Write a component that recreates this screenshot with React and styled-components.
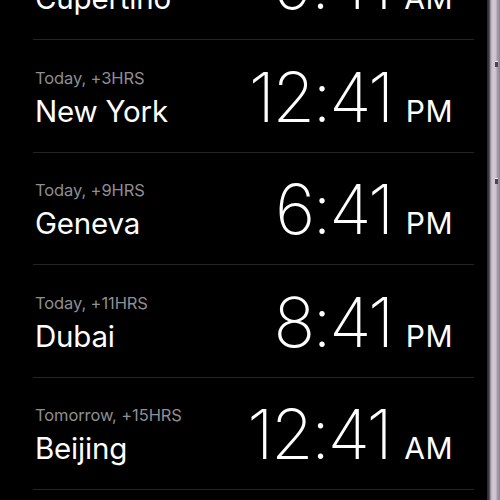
import React from "react";
import styled, { createGlobalStyle } from "styled-components";

const GlobalStyle = createGlobalStyle`
  html, body {
    margin: 0;
    padding: 0;
    background: #000;
  }
  body {
    font-family: Inter, "Noto Sans", sans-serif;
    -webkit-font-smoothing: antialiased;
  }
`;

const Device = styled.div`
  display: flex;
  width: 500px;
  height: 500px;
  overflow: hidden;
`;

const Screen = styled.div`
  flex: 1;
  background: #000;
  padding: 0 13px 0 33px;
  overflow: hidden;
`;

const Bezel = styled.div`
  position: relative;
  width: 13px;
  background: linear-gradient(
    to right,
    #2c2a30 0px,
    #3c3940 2px,
    #76707c 3px,
    #b8afbb 4px,
    #d2c9d3 6px,
    #cbc2cd 9px,
    #a69eae 10px,
    #8d8597 13px
  );
`;

const Notch = styled.span`
  position: absolute;
  left: 8px;
  top: ${(p) => p.top}px;
  width: 3px;
  height: 5px;
  background: #4a4650;
  border-top: 1px solid #f0eaf2;
`;

const List = styled.div`
  margin-top: -72.5px;
`;

const Row = styled.div`
  display: flex;
  justify-content: space-between;
  align-items: last baseline;
  border-bottom: 1px solid #242426;
  padding: 0 21px 13px 2px;
  box-sizing: border-box;
  height: 112.5px;
`;

const Place = styled.div`
  display: flex;
  flex-direction: column;
`;

const Offset = styled.div`
  color: #8e8e93;
  font-size: 16.5px;
  line-height: 19px;
  letter-spacing: -0.1px;
`;

const City = styled.div`
  color: #fff;
  font-size: 29.5px;
  line-height: 34px;
  margin-top: 6px;
  letter-spacing: -0.2px;
`;

const Time = styled.div`
  color: #fff;
  white-space: nowrap;
`;

const Digits = styled.span`
  font-size: 69px;
  font-weight: 200;
  letter-spacing: -2.5px;
`;

const Period = styled.span`
  font-size: 30px;
  font-weight: 400;
  margin-left: 14px;
  letter-spacing: 0.5px;
`;

const clocks = [
  { offset: "Today, +0HRS", city: "Cupertino", time: "9:41", period: "AM" },
  { offset: "Today, +3HRS", city: "New York", time: "12:41", period: "PM" },
  { offset: "Today, +9HRS", city: "Geneva", time: "6:41", period: "PM" },
  { offset: "Today, +11HRS", city: "Dubai", time: "8:41", period: "PM" },
  { offset: "Tomorrow, +15HRS", city: "Beijing", time: "12:41", period: "AM" },
];

const App = () => (
  <>
    <GlobalStyle />
    <Device>
      <Screen>
        <List>
          {clocks.map((c) => (
            <Row key={c.city}>
              <Place>
                <Offset>{c.offset}</Offset>
                <City>{c.city}</City>
              </Place>
              <Time>
                <Digits>{c.time}</Digits>
                <Period>{c.period}</Period>
              </Time>
            </Row>
          ))}
        </List>
      </Screen>
      <Bezel>
        <Notch top={61} />
        <Notch top={178} />
      </Bezel>
    </Device>
  </>
);

export default App;
